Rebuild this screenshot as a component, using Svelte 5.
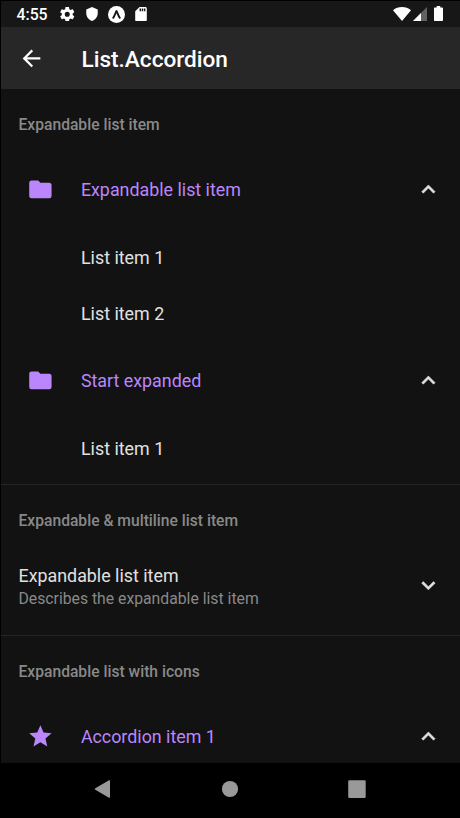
<script>
  const paths = {
    folder: 'M10 4H4c-1.11 0-2 .89-2 2v12a2 2 0 0 0 2 2h16a2 2 0 0 0 2-2V8c0-1.11-.9-2-2-2h-8l-2-2z',
    star: 'M12 17.27 18.18 21l-1.64-7.03L22 9.24l-7.19-.62L12 2 9.19 8.62 2 9.24l5.45 4.73L5.82 21z',
    up: 'M7.41 15.41 12 10.83l4.59 4.58L18 14l-6-6-6 6z',
    down: 'M7.41 8.59 12 13.17l4.59-4.58L18 10l-6 6-6-6z',
    back: 'M20 11v2H8l5.5 5.5-1.42 1.42L4.16 12l7.92-7.92L13.5 5.5 8 11z'
  };
  const sections = [
    {
      title: 'Expandable list item',
      rows: [
        { title: 'Expandable list item', icon: 'folder', open: true, items: ['List item 1', 'List item 2'] },
        { title: 'Start expanded', icon: 'folder', open: true, items: ['List item 1'] }
      ]
    },
    {
      title: 'Expandable & multiline list item',
      rows: [{ title: 'Expandable list item', description: 'Describes the expandable list item', open: false, items: [] }]
    },
    {
      title: 'Expandable list with icons',
      rows: [{ title: 'Accordion item 1', icon: 'star', open: true, items: [] }]
    }
  ];
</script>

{#snippet icon(name)}
  <svg class="icon" viewBox="0 0 24 24"><path d={paths[name]} /></svg>
{/snippet}

<div class="screen">
  <div class="status">
    <span class="time">4:55</span>
    <svg class="gear" viewBox="2 2 20 20"><path d="M19.43 12.98c.04-.32.07-.64.07-.98s-.03-.66-.07-.98l2.11-1.65c.19-.15.24-.42.12-.64l-2-3.46c-.12-.22-.39-.3-.61-.22l-2.49 1c-.52-.4-1.08-.73-1.69-.98l-.38-2.65A.49.49 0 0 0 14 2h-4c-.25 0-.46.18-.49.42l-.38 2.65c-.61.25-1.17.59-1.69.98l-2.49-1c-.23-.09-.49 0-.61.22l-2 3.46c-.13.22-.07.49.12.64l2.11 1.65c-.04.32-.07.65-.07.98s.03.66.07.98l-2.11 1.65c-.19.15-.24.42-.12.64l2 3.46c.12.22.39.3.61.22l2.49-1c.52.4 1.08.73 1.69.98l.38 2.65c.03.24.24.42.49.42h4c.25 0 .46-.18.49-.42l.38-2.65c.61-.25 1.17-.59 1.69-.98l2.49 1c.23.09.49 0 .61-.22l2-3.46c.12-.22.07-.49-.12-.64zM12 15.5a3.5 3.5 0 1 1 0-7 3.5 3.5 0 0 1 0 7z" /></svg>
    <svg class="shield" viewBox="3 1 18 22"><path d="M12 1 3 5v6c0 5.55 3.84 10.74 9 12 5.16-1.26 9-6.45 9-12V5z" /></svg>
    <svg class="expo" viewBox="0 0 17 17"><circle cx="8.5" cy="8.5" r="8.5" /><path class="caret" d="M5.2 11.8C6.6 10 7.3 7.2 8.5 5c1.2 2.2 1.9 5 3.3 6.8" /></svg>
    <svg class="sd" viewBox="4 2 16 20"><path d="M18 2h-8L4.02 8 4 20c0 1.1.9 2 2 2h12c1.1 0 2-.9 2-2V4c0-1.1-.9-2-2-2zm-6 6h-2V4h2zm3 0h-2V4h2zm3 0h-2V4h2z" /></svg>
    <span class="grow"></span>
    <svg class="wifi" viewBox="0 0 18 14"><path d="M9 14 0 3.3C2.6 1.1 5.6 0 9 0s6.4 1.1 9 3.3z" /></svg>
    <svg class="signal" viewBox="0 0 14 14"><path class="dim" d="M14 0v14H0z" /><path d="M8 6v8H0z" /></svg>
    <svg class="battery" viewBox="0 0 9 15"><path d="M2.7 0h3.6v1.5h2q.7 0 .7.7V14.3q0 .7-.7.7H.7q-.7 0-.7-.7V2.2q0-.7.7-.7h2z" /></svg>
  </div>
  <header>
    {@render icon('back')}
    <h1>List.Accordion</h1>
  </header>
  <main>
    {#each sections as section}
      <section>
        <h2>{section.title}</h2>
        {#each section.rows as row}
          <div class="row" class:tinted={row.icon}>
            {#if row.icon}<span class="lead">{@render icon(row.icon)}</span>{/if}
            <div class="text">
              <div class="title">{row.title}</div>
              {#if row.description}<div class="description">{row.description}</div>{/if}
            </div>
            <span class="chevron">{@render icon(row.open ? 'up' : 'down')}</span>
          </div>
          {#each row.items as item}
            <div class="item">{item}</div>
          {/each}
        {/each}
      </section>
    {/each}
  </main>
  <nav>
    <svg viewBox="0 0 20 20"><path d="M2.3 9.2 16 1.3q1-.5 1 .6v16.2q0 1.1-1 .6L2.3 10.8q-1.3-.8 0-1.6z" /></svg>
    <svg viewBox="0 0 20 20"><circle cx="10" cy="10" r="8.1" /></svg>
    <svg viewBox="0 0 20 20"><rect x="1.2" y="1.3" width="17.5" height="17.7" rx="1.3" /></svg>
  </nav>
</div>

<style>
  :global(body) { margin: 0; background: #000; }
  .screen {
    box-sizing: border-box;
    width: 460px;
    height: 818px;
    padding: 1px 0 0 1px;
    display: flex;
    flex-direction: column;
    overflow: hidden;
    background: #000;
    color: #e1e1e1;
    font-family: Roboto, "Liberation Sans", sans-serif;
  }
  svg { display: block; flex: none; fill: currentColor; }
  .icon { width: 26.8px; height: 26.8px; }
  .chevron { stroke: currentColor; stroke-width: .5; stroke-linejoin: round; }
  .status {
    box-sizing: border-box;
    flex: none;
    height: 26px;
    padding: 0 17px 0 15.5px;
    display: flex;
    align-items: center;
    background: #171717;
    color: #fff;
  }
  .time { width: 43.5px; padding-top: 1px; font-size: 15.8px; font-weight: 500; line-height: 24px; }
  .gear { width: 14.5px; height: 14.5px; }
  .shield { width: 12px; height: 14px; margin-left: 11.5px; }
  .expo { width: 17px; height: 17px; margin-left: 10px; }
  .caret { fill: none; stroke: #171717; stroke-width: 1.9; stroke-linecap: round; stroke-linejoin: round; }
  .sd { width: 12px; height: 14.5px; margin-left: 10px; }
  .grow { flex: 1; }
  .wifi { width: 18px; height: 14px; margin: 0 2px 1px 0; }
  .signal { width: 14px; height: 14px; margin-right: 7px; }
  .battery { width: 9px; height: 15px; margin-bottom: 1px; }
  .dim { opacity: .32; }
  header {
    flex: none;
    height: 62px;
    padding-left: 17.4px;
    display: flex;
    align-items: center;
    gap: 36.3px;
    background: #272727;
    color: #fff;
  }
  h1 { margin: 3px 0 0; font-size: 22.6px; line-height: 28px; font-weight: 500; }
  main { flex: 1; min-height: 0; overflow: hidden; background: #121212; }
  section + section { border-top: 1px solid #252525; }
  section { padding-bottom: 10.5px; }
  section:first-child { padding-bottom: 8.5px; }
  h2 {
    box-sizing: border-box;
    height: 60.5px;
    margin: 0;
    padding: 25px 17.5px 0;
    font-size: 15.65px;
    line-height: 22px;
    font-weight: 500;
    color: #898989;
  }
  .row { height: 79px; padding: 0 18px 0 17.5px; display: flex; align-items: center; }
  .lead { width: 54.2px; padding-left: 8.2px; }
  .lead, .tinted .title { color: #bb86fc; }
  .text { flex: 1; padding-top: 3px; }
  .tinted .text { padding-top: 1.5px; }
  .title, .item { font-size: 17.85px; }
  .title { line-height: 24px; }
  .description { font-size: 15.75px; line-height: 21px; color: #898989; }
  .item { box-sizing: border-box; height: 56px; padding: 1px 0 0 80px; line-height: 56px; }
  nav {
    box-sizing: border-box;
    flex: none;
    height: 55px;
    padding: 0 1.4px 3px 0;
    display: flex;
    align-items: center;
    justify-content: center;
    gap: 107px;
    color: #999;
  }
  nav svg { width: 20px; height: 20px; }
</style>
